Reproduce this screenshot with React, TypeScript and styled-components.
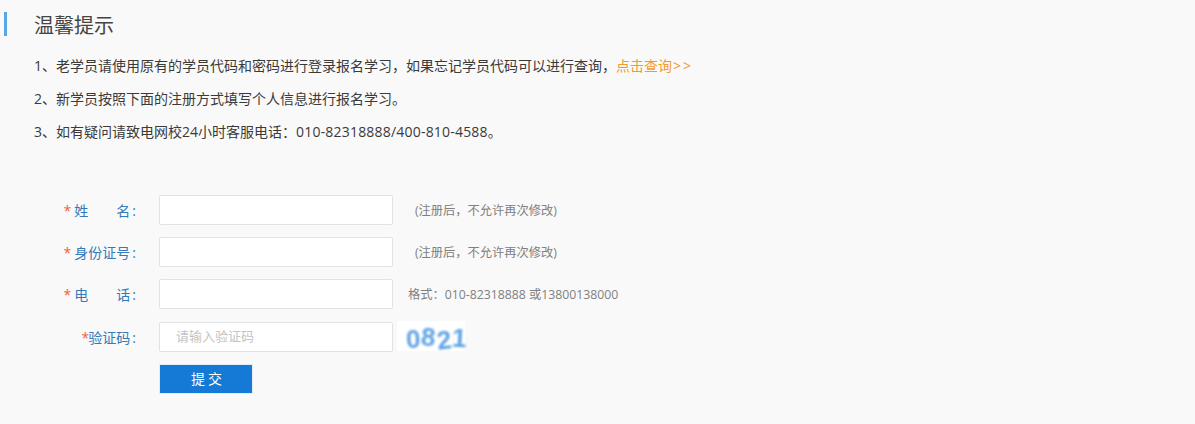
import styled, { createGlobalStyle } from "styled-components";

const GlobalStyle = createGlobalStyle`
  html, body {
    margin: 0;
    padding: 0;
    background: #f9f9f9;
  }
  body {
    font-family: "Open Sans", "Noto Sans CJK SC", sans-serif;
  }
`;

const Page = styled.div`
  width: 1195px;
  height: 424px;
  overflow: hidden;
  background: #f9f9f9;
  padding-top: 12px;
  box-sizing: border-box;
`;

// heading with the blue bar on its left
const Heading = styled.h2`
  margin: 0 0 0 4px;
  height: 24px;
  padding-left: 27px;
  border-left: 3px solid #5aa5ea;
  font-size: 20px;
  font-weight: normal;
  line-height: 27px;
  color: #444;
`;

const Notes = styled.div`
  margin-top: 13px;
  padding-left: 34px;
`;

const Note = styled.p`
  margin: 0;
  font-size: 14px;
  line-height: 33px;
  color: #3a3a3a;
`;

const QueryLink = styled.a`
  color: #f29a2e;
  cursor: pointer;
`;

const Arrows = styled.span`
  margin-left: 1px;
  letter-spacing: 2px;
`;

const Phone = styled.span`
  letter-spacing: 0.2px;
`;

const Form = styled.form`
  margin-top: 47px;
  display: flex;
  flex-direction: column;
  gap: 12px;
`;

const Row = styled.div<{ $push?: number }>`
  display: flex;
  align-items: center;
  height: 30px;
  margin-top: ${(p) => p.$push ?? 0}px;
`;

const Label = styled.label`
  width: 136px;
  margin-right: 23px;
  text-align: right;
  font-size: 14px;
  color: #337ab7;
  white-space: pre;
`;

const Star = styled.span<{ $gap: number }>`
  color: #f0623c;
  margin-right: ${(p) => p.$gap}px;
`;

const Colon = styled.span`
  margin-left: 2px;
`;

const Input = styled.input`
  width: 234px;
  height: 30px;
  box-sizing: border-box;
  padding: 0 16px 2px;
  background: #fff;
  border: 1px solid #e2e2e2;
  border-radius: 2px;
  font-family: inherit;
  font-size: 13px;
  outline: none;

  &::placeholder {
    color: #c4c4c4;
  }
`;

const Hint = styled.span<{ $indent: number }>`
  margin-left: ${(p) => p.$indent}px;
  font-size: 12.25px;
  color: #808080;
`;

const Captcha = styled.div`
  margin-left: 4px;
  margin-top: -2px;
  width: 68px;
  height: 30px;
  box-sizing: border-box;
  padding: 6px 0 0 9px;
  display: flex;
  align-items: center;
  background: #fff;
  color: #5fa3e6;
  font-family: "Liberation Sans", sans-serif;
  font-size: 26px;
  font-weight: bold;
`;

const Digit = styled.span<{ $tilt: number; $lift: number }>`
  display: inline-block;
  transform: translateY(${(p) => p.$lift}px) rotate(${(p) => p.$tilt}deg);
  margin-right: 1px;
  filter: blur(0.8px);
`;

const SubmitButton = styled.button`
  margin-left: 159px;
  width: 94px;
  height: 30px;
  padding: 0 0 3px 4px;
  border: 1px solid #e3edf7;
  background: #1579d6;
  color: #fff;
  font-family: inherit;
  font-size: 14px;
  letter-spacing: 3px;
  cursor: pointer;
  align-self: flex-start;
`;

const digits = [
  { ch: "0", tilt: -3, lift: 0 },
  { ch: "8", tilt: 5, lift: -2 },
  { ch: "2", tilt: -7, lift: 1 },
  { ch: "1", tilt: 3, lift: -1 },
];

export default function App() {
  return (
    <Page>
      <GlobalStyle />
      <Heading>温馨提示</Heading>
      <Notes>
        <Note>
          1、老学员请使用原有的学员代码和密码进行登录报名学习，如果忘记学员代码可以进行查询，
          <QueryLink>
            点击查询<Arrows>&gt;&gt;</Arrows>
          </QueryLink>
        </Note>
        <Note>2、新学员按照下面的注册方式填写个人信息进行报名学习。</Note>
        <Note>
          3、如有疑问请致电网校24小时客服电话：<Phone>010-82318888/400-810-4588</Phone>。
        </Note>
      </Notes>
      <Form>
        <Row>
          <Label>
            <Star $gap={3}>*</Star>姓{"\u3000\u3000"}名<Colon>:</Colon>
          </Label>
          <Input />
          <Hint $indent={22}>(注册后，不允许再次修改)</Hint>
        </Row>
        <Row>
          <Label>
            <Star $gap={3}>*</Star>身份证号<Colon>:</Colon>
          </Label>
          <Input />
          <Hint $indent={22}>(注册后，不允许再次修改)</Hint>
        </Row>
        <Row>
          <Label>
            <Star $gap={3}>*</Star>电{"\u3000\u3000"}话<Colon>:</Colon>
          </Label>
          <Input />
          <Hint $indent={15}>格式：010-82318888 或13800138000</Hint>
        </Row>
        <Row $push={1}>
          <Label>
            <Star $gap={-1}>*</Star>验证码<Colon>:</Colon>
          </Label>
          <Input placeholder="请输入验证码" />
          <Captcha>
            {digits.map((d) => (
              <Digit key={d.ch} $tilt={d.tilt} $lift={d.lift}>
                {d.ch}
              </Digit>
            ))}
          </Captcha>
        </Row>
        <SubmitButton type="button">提交</SubmitButton>
      </Form>
    </Page>
  );
}
